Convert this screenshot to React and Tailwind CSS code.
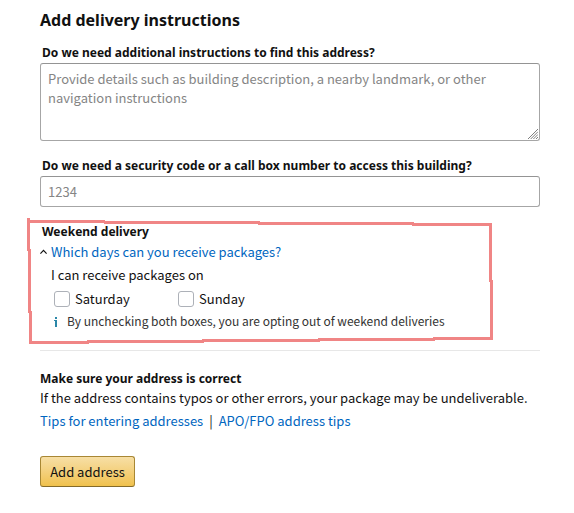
const boldClass = "font-['Noto_Sans',sans-serif] text-[12px] leading-[21px] font-bold";

function Label({ htmlFor, children }) {
  return (
    <label htmlFor={htmlFor} className={`block px-0.5 ${boldClass}`}>
      {children}
    </label>
  );
}

function DayOption({ id, children }) {
  return (
    <div className="flex w-[124px] items-center gap-[5px]">
      <input
        id={id}
        type="checkbox"
        className="size-4 shrink-0 appearance-none rounded-[3px] border border-[#adb1b8] bg-white checked:bg-[#0066c0]"
      />
      <label htmlFor={id}>{children}</label>
    </div>
  );
}

const fieldClass =
  "block w-full rounded-[3px] border border-[#a6a6a6] border-t-[#949494] bg-white px-[7px] text-[#111] placeholder:text-[#858585] outline-none";

export default function App() {
  return (
    <main className="min-h-screen bg-white pt-2 pr-[34px] pb-6 pl-10 font-['Noto_Sans_CJK_SC','Noto_Sans',sans-serif] text-[13px] leading-5 text-[#111]">
      <h1 className="font-['Noto_Sans',sans-serif] text-[16px] leading-6 font-bold">Add delivery instructions</h1>

      <form onSubmit={(event) => event.preventDefault()}>
        <div className="relative mt-2.5">
          <Label htmlFor="instructions">Do we need additional instructions to find this address?</Label>
          <textarea
            id="instructions"
            className={`${fieldClass} h-[78px] resize-none py-[5px] leading-[19px]`}
            placeholder="Provide details such as building description, a nearby landmark, or other navigation instructions"
          />
          <svg
            className="pointer-events-none absolute right-0.5 bottom-0.5 size-2.5"
            viewBox="0 0 10 10"
            fill="none"
            stroke="#707070"
            strokeWidth="0.9"
            aria-hidden="true"
          >
            <path d="M0 10 10 0M2.7 10 10 2.7M5.4 10 10 5.4M8 10l2-2" />
          </svg>
        </div>

        <div className="mt-3.5">
          <Label htmlFor="code">Do we need a security code or a call box number to access this building?</Label>
          <input id="code" type="text" className={`${fieldClass} h-[31px]`} placeholder="1234" />
        </div>

        <section className="relative mt-3.5">
          <h2 className={`px-0.5 ${boldClass}`}>Weekend delivery</h2>
          <button type="button" className="flex items-center gap-1 text-[#0066c0]" aria-expanded="true">
            <svg className="h-[7px] w-[7px] text-[#111]" viewBox="0 0 7 7" fill="none" stroke="currentColor" strokeWidth="1.2" aria-hidden="true">
              <path d="M.4 4.6 3.5 1.4 6.6 4.6" />
            </svg>
            Which days can you receive packages?
          </button>
          <fieldset className="mt-[3px] pl-[11px]">
            <legend>I can receive packages on</legend>
            <div className="mt-1 flex pl-[3px]">
              <DayOption id="saturday">Saturday</DayOption>
              <DayOption id="sunday">Sunday</DayOption>
            </div>
          </fieldset>
          <p className="mt-0.5 flex items-center gap-2 pl-3.5 text-[12px] text-[#333]">
            <svg className="h-[11px] w-[5px] shrink-0 text-[#2b87a8]" viewBox="0 0 5 11" fill="currentColor" aria-hidden="true">
              <path d="M1 1h2v2H1zM0 4h3v7H1V5H0z" />
            </svg>
            By unchecking both boxes, you are opting out of weekend deliveries
          </p>
          <svg
            className="pointer-events-none absolute -top-[3px] -left-[13px] h-[126px] w-[466px]"
            viewBox="0 0 466 126"
            fill="#f08585"
            aria-hidden="true"
          >
            <path d="M0 2h78v3H0zM77 3h156v3H77zM231 4h156v3H231zM385 5h80v3h-80z" />
            <path d="M462 5h3v59h-3zM463 62h3v60h-3z" />
            <path d="M2 123h60v3H2zM60 122h117v3H60zM175 121h118v3H175zM291 120h117v3H291zM406 119h60v3h-60z" />
            <path d="M0 0h3v33H0zM1 31h3v64H1zM2 93h3v33H2z" />
          </svg>
        </section>

        <hr className="mt-[19px] border-[#e7e7e7]" />

        <section className="mt-[17px]">
          <h2 className={boldClass}>Make sure your address is correct</h2>
          <p className="leading-[18px]">If the address contains typos or other errors, your package may be undeliverable.</p>
          <p className="mt-1 flex gap-1.5">
            <a href="#tips" className="text-[#0066c0]">Tips for entering addresses</a>
            <span>|</span>
            <a href="#apo" className="text-[#0066c0]">APO/FPO address tips</a>
          </p>
        </section>

        <button
          type="submit"
          className="mt-[25px] h-[31px] min-w-[95px] rounded-[3px] border border-[#a88734] border-b-[#846a29] bg-linear-to-b from-[#f7dfa5] to-[#f0c14b] px-2"
        >
          Add address
        </button>
      </form>
    </main>
  );
}
